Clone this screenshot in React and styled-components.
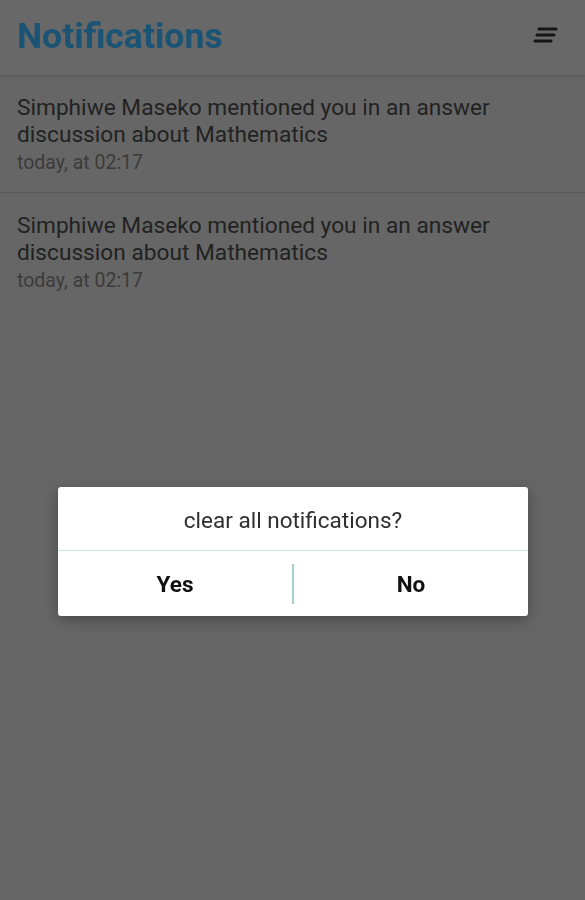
import React from 'react';
import styled, { createGlobalStyle } from 'styled-components';

const GlobalStyle = createGlobalStyle`
	html, body {
		margin: 0;
		padding: 0;
		background: #666666;
	}
	body {
		font-family: Roboto, "Noto Sans", Arial, sans-serif;
	}
`;

const Screen = styled.div`
	display: flex;
	flex-direction: column;
	width: 585px;
	height: 900px;
	background: #666666;
	overflow: hidden;
`;

const Header = styled.div`
	display: flex;
	align-items: center;
	justify-content: space-between;
	height: 75px;
	padding: 0 24px 0 17px;
	background: #686868;
	box-shadow: 0 2px 4px rgba(0, 0, 0, 0.12);
	box-sizing: border-box;
	position: relative;
	z-index: 1;
`;

const Title = styled.h1`
	margin: 0;
	font-size: 35.6px;
	font-weight: 700;
	color: #1a5374;
	padding-bottom: 4px;
`;

const MenuButton = styled.div`
	display: flex;
	align-items: center;
	justify-content: center;
	width: 30px;
	height: 30px;
	margin-bottom: 6px;
`;

const List = styled.div`
	display: flex;
	flex-direction: column;
`;

const Item = styled.div`
	display: flex;
	flex-direction: column;
	padding: 19px 17px 17px;
	border-bottom: ${(p) => (p.last ? 'none' : '1.5px solid #5b5b5b')};
`;

const Message = styled.div`
	font-size: 22.7px;
	line-height: 27px;
	color: #222222;
	padding-right: 60px;
`;

const Time = styled.div`
	margin-top: 2px;
	font-size: 19.5px;
	line-height: 25px;
	color: #3b3b3b;
`;

const Backdrop = styled.div`
	position: fixed;
	inset: 0;
	display: flex;
	align-items: flex-start;
	justify-content: center;
	padding-top: 487px;
`;

const Dialog = styled.div`
	display: flex;
	flex-direction: column;
	width: 470px;
	margin-left: 1px;
	background: #ffffff;
	border-radius: 3px;
	box-shadow: 0 4px 14px rgba(0, 0, 0, 0.3);
`;

const DialogText = styled.div`
	display: flex;
	align-items: center;
	justify-content: center;
	height: 64px;
	padding-top: 2px;
	box-sizing: border-box;
	font-size: 22.5px;
	color: #2e2e2e;
	border-bottom: 1.5px solid #cfe3e3;
`;

const Actions = styled.div`
	display: flex;
	align-items: center;
	height: 65px;
`;

const ActionButton = styled.div`
	flex: 1;
	display: flex;
	align-items: center;
	justify-content: center;
	font-size: 22.5px;
	font-weight: 700;
	color: #111111;
`;

const VDivider = styled.div`
	width: 2px;
	height: 40px;
	background: #a5d1d3;
`;

const SortIcon = () => (
	<svg width="28" height="20" viewBox="0 0 28 20">
		<g stroke="#151515" strokeWidth="3" strokeLinecap="round">
			<line x1="7" y1="4" x2="24" y2="4" />
			<line x1="5" y1="10" x2="22" y2="10" />
			<line x1="3" y1="16" x2="19" y2="16" />
		</g>
	</svg>
);

const notifications = [
	{ text: 'Simphiwe Maseko mentioned you in an answer discussion about Mathematics', time: 'today, at 02:17' },
	{ text: 'Simphiwe Maseko mentioned you in an answer discussion about Mathematics', time: 'today, at 02:17' },
];

const App = () => {
	return (
		<Screen>
			<GlobalStyle />
			<Header>
				<Title>Notifications</Title>
				<MenuButton>
					<SortIcon />
				</MenuButton>
			</Header>
			<List>
				{notifications.map((n, id) => (
					<Item key={id} last={id === notifications.length - 1}>
						<Message>{n.text}</Message>
						<Time>{n.time}</Time>
					</Item>
				))}
			</List>
			<Backdrop>
				<Dialog>
					<DialogText>clear all notifications?</DialogText>
					<Actions>
						<ActionButton>Yes</ActionButton>
						<VDivider />
						<ActionButton>No</ActionButton>
					</Actions>
				</Dialog>
			</Backdrop>
		</Screen>
	);
};

export default App;
